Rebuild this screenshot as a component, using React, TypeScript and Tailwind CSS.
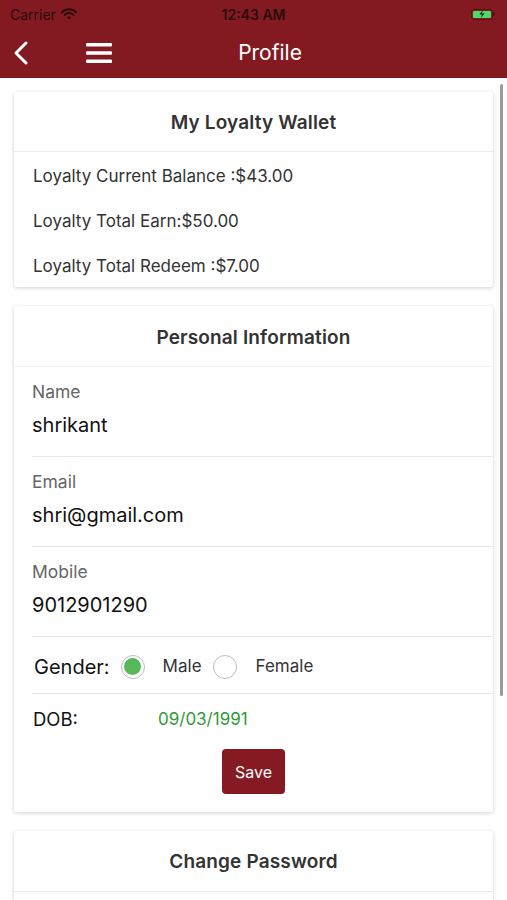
import React from "react";

const Field = ({ label, value }: { label: string; value: string }) => (
  <div className="ml-[18px] border-b border-[#e6e6e6] pt-[14px] pb-[20px]">
    <div className="text-[17.5px] leading-[22px] text-[#666]">{label}</div>
    <div className="mt-[11px] text-[20px] leading-[22px] text-[#111]">{value}</div>
  </div>
);

export default function App() {
  return (
    <div className="relative w-[507px] h-[900px] overflow-hidden bg-white" style={{ fontFamily: "Inter, 'Open Sans', sans-serif" }}>
      {/* Top bar */}
      <div className="bg-[#831a22] h-[78px] flex flex-col">
        <div className="h-[28px] flex items-center px-[10px] relative">
          <div className="flex items-center gap-[5px] text-[14px] text-[#2a0a0c]">
            <span>Carrier</span>
            <svg width="16" height="12" viewBox="0 0 16 12">
              <path d="M1 4.2a10 10 0 0 1 14 0" stroke="#2a0a0c" strokeWidth="2" fill="none" strokeLinecap="round" />
              <path d="M3.6 6.9a6.2 6.2 0 0 1 8.8 0" stroke="#2a0a0c" strokeWidth="2" fill="none" strokeLinecap="round" />
              <path d="M6 9.6a2.8 2.8 0 0 1 4 0L8 11.6z" fill="#2a0a0c" />
            </svg>
          </div>
          <div className="absolute left-0 right-0 text-center text-[14px] font-semibold text-[#2a0a0c] pointer-events-none">12:43 AM</div>
          <div className="ml-auto flex items-center mr-[2px]">
            <div className="w-[22px] h-[11px] rounded-[3px] border border-[#5a1016] p-[1px]">
              <div className="w-full h-full bg-[#4cd964] rounded-[1px] flex items-center justify-center">
                <svg width="8" height="8" viewBox="0 0 8 8"><path d="M5 0L1.5 4.5H4L3 8L6.5 3.5H4z" fill="#1a1a1a" /></svg>
              </div>
            </div>
            <div className="w-[2px] h-[4px] bg-[#5a1016] rounded-r-[1px]" />
          </div>
        </div>
        <div className="flex-1 flex items-center relative">
          <svg className="ml-[12px]" width="18" height="26" viewBox="0 0 18 26">
            <path d="M14 3L4 13l10 10" stroke="white" strokeWidth="3" fill="none" strokeLinecap="round" strokeLinejoin="round" />
          </svg>
          <svg className="ml-[56px]" width="26" height="22" viewBox="0 0 26 22">
            <rect x="0" y="1" width="26" height="3.5" rx="1" fill="white" />
            <rect x="0" y="9.2" width="26" height="3.5" rx="1" fill="white" />
            <rect x="0" y="17.5" width="26" height="3.5" rx="1" fill="white" />
          </svg>
          <div className="absolute left-[33px] right-0 text-center text-[21px] text-white">Profile</div>
        </div>
      </div>

      <div className="px-[14px] pt-[14px] flex flex-col gap-[19px]">
        {/* Card 1 */}
        <div className="w-[479px] bg-white rounded-[3px] shadow-[0_1px_4px_rgba(0,0,0,0.18)]">
          <div className="h-[60px] pt-[3px] flex items-center justify-center border-b border-[#ececec] text-[19px] tracking-[0.15px] font-semibold text-[#333]">My Loyalty Wallet</div>
          <div className="pl-[19px] pt-[13px] pb-[10px] text-[17px] text-[#333] flex flex-col gap-[23px] leading-[22px]">
            <div>Loyalty Current Balance :$43.00</div>
            <div>Loyalty Total Earn:$50.00</div>
            <div>Loyalty Total Redeem :$7.00</div>
          </div>
        </div>

        {/* Card 2 */}
        <div className="w-[479px] bg-white rounded-[3px] shadow-[0_1px_4px_rgba(0,0,0,0.18)]">
          <div className="h-[61px] pt-[5px] flex items-center justify-center border-b border-[#f3f3f3] text-[19px] tracking-[0.15px] font-semibold text-[#333]">Personal Information</div>
          <Field label="Name" value="shrikant" />
          <Field label="Email" value="shri@gmail.com" />
          <Field label="Mobile" value="9012901290" />
          <div className="ml-[18px] border-b border-[#e6e6e6] h-[57px] pt-[3px] flex items-center">
            <span className="ml-[2px] text-[20px] text-[#111]">Gender:</span>
            <div className="ml-[11px] w-[24px] h-[24px] rounded-full border-[1.5px] border-[#bbb] flex items-center justify-center">
              <div className="w-[17px] h-[17px] rounded-full bg-[#55b95a]" />
            </div>
            <span className="ml-[18px] text-[17px] text-[#333]">Male</span>
            <div className="ml-[11px] w-[24px] h-[24px] rounded-full border-[1.5px] border-[#bbb]" />
            <span className="ml-[19px] text-[17px] text-[#333]">Female</span>
          </div>
          <div className="ml-[19px] mt-[14px] flex items-center h-[24px]">
            <span className="w-[125px] text-[18.5px] text-[#111]">DOB:</span>
            <span className="text-[17px] text-[#2f9a3a]">09/03/1991</span>
          </div>
          <div className="flex justify-center mt-[17px] pb-[18px]">
            <div className="w-[63px] h-[45px] rounded-[4px] bg-[#861a22] text-white text-[16px] flex items-center justify-center">Save</div>
          </div>
        </div>

        {/* Card 3 */}
        <div className="w-[479px] bg-white rounded-[3px] shadow-[0_1px_4px_rgba(0,0,0,0.18)]">
          <div className="h-[61px] pt-[3px] flex items-center justify-center border-b border-[#ececec] text-[19px] tracking-[0.15px] font-semibold text-[#333]">Change Password</div>
          <div className="h-[40px]" />
        </div>
      </div>

      {/* scroll indicator */}
      <div className="absolute left-[500px] top-[84px] w-[3px] h-[612px] rounded-full bg-[#9a9a9a]" />
    </div>
  );
}
